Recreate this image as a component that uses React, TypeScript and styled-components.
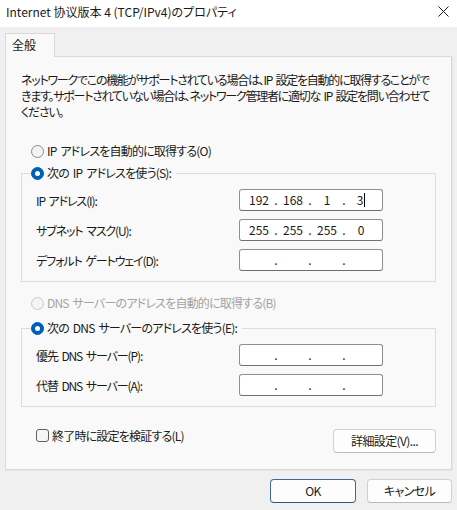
import React from 'react';
import styled, { createGlobalStyle, css } from 'styled-components';

const GlobalStyle = createGlobalStyle`
  html, body {
    margin: 0;
    padding: 0;
    background: #f0f0f0;
  }
  body {
    font-family: "Noto Sans CJK JP", "Noto Sans", sans-serif;
    font-size: 12px;
    color: #1a1a1a;
    font-feature-settings: "palt";
  }
`;

const Window = styled.div`
  width: 457px;
  height: 510px;
  display: flex;
  flex-direction: column;
  background: #f0f0f0;
  overflow: hidden;
`;

const TitleBar = styled.div`
  height: 27px;
  flex: none;
  display: flex;
  align-items: flex-start;
  justify-content: space-between;
  background: #ffffff;
  padding: 4px 7px 0 6px;
  box-sizing: border-box;
`;

const Title = styled.div`
  line-height: 16px;
  white-space: nowrap;
`;

const CloseIcon = styled.svg`
  margin-top: 2px;
  margin-right: 1px;
`;

const Body = styled.div`
  padding: 6px 5px 0;
`;

const TabStrip = styled.div`
  display: flex;
`;

const Tab = styled.div`
  width: 50px;
  height: 24px;
  box-sizing: border-box;
  border: 1px solid #d9d9d9;
  border-bottom: none;
  background: #f9f9f9;
  padding-left: 6px;
  line-height: 22px;
  position: relative;
  z-index: 1;
  margin-bottom: -1px;
`;

const Panel = styled.div`
  border: 1px solid #d9d9d9;
  box-shadow: 1px 1px 0 #e6e6e6;
  background: #f9f9f9;
  padding: 15px 15px 16px 15px;
  letter-spacing: -0.8px;
  word-spacing: 2px;
`;

const Description = styled.p`
  margin: 0;
  line-height: 16px;
  white-space: nowrap;
  letter-spacing: -1.25px;
`;

const radioBase = css`
  width: 13px;
  height: 13px;
  border-radius: 50%;
  box-sizing: border-box;
  flex: none;
  position: relative;
`;

const RadioDot = styled.span<{ $checked?: boolean; $disabled?: boolean }>`
  ${radioBase}
  border: 1px solid ${(p) => (p.$disabled ? '#c9c9c9' : '#8a8a8a')};
  background: ${(p) => (p.$disabled ? '#f4f4f4' : '#f3f3f3')};
  ${(p) =>
    p.$checked &&
    css`
      border-color: #005fb8;
      background: #005fb8;
      &::after {
        content: '';
        position: absolute;
        left: 3px;
        top: 3px;
        width: 5px;
        height: 5px;
        border-radius: 50%;
        background: #ffffff;
      }
    `}
`;

const RadioRow = styled.div<{ $top: number; $disabled?: boolean }>`
  display: flex;
  align-items: center;
  gap: 3px;
  height: 16px;
  line-height: 16px;
  padding-left: 10px;
  margin-top: ${(p) => p.$top}px;
  color: ${(p) => (p.$disabled ? '#a3a3a3' : 'inherit')};
  white-space: nowrap;
`;

const Group = styled.fieldset<{ $top: number }>`
  margin: ${(p) => p.$top}px 0 0;
  padding: 8px 0 10px 14px;
  border: 1px solid #dcdcdc;
  min-width: 0;
`;

const Legend = styled.legend`
  display: flex;
  align-items: center;
  gap: 3px;
  height: 16px;
  margin-left: -5px;
  padding: 0 5px 0 0;
  line-height: 16px;
  white-space: nowrap;
`;

const FieldGrid = styled.div`
  display: grid;
  grid-template-columns: 203px 144px;
  row-gap: 8px;
  align-items: center;
`;

const FieldLabel = styled.span`
  white-space: nowrap;
  letter-spacing: -1.1px;
`;

const IpBox = styled.div`
  width: 144px;
  height: 22px;
  box-sizing: border-box;
  border: 1px solid #8f8f8f;
  border-bottom-color: #6f6f6f;
  border-radius: 3px;
  background: #ffffff;
  display: flex;
  align-items: center;
  padding-left: 5px;
  line-height: 16px;
  letter-spacing: 0;
`;

const Octet = styled.span`
  width: 28px;
  text-align: center;
`;

const Sep = styled.span`
  width: 6px;
  text-align: center;
`;

const Caret = styled.span`
  display: inline-block;
  width: 1px;
  height: 14px;
  background: #000;
  vertical-align: -2px;
  margin-left: 1px;
`;

const BottomRow = styled.div`
  display: flex;
  justify-content: space-between;
  align-items: flex-start;
  margin-top: 20px;
`;

const CheckRow = styled.label`
  display: flex;
  align-items: center;
  gap: 3px;
  height: 16px;
  padding-left: 15px;
  white-space: nowrap;
`;

const CheckBox = styled.span`
  width: 13px;
  height: 13px;
  box-sizing: border-box;
  border: 1px solid #616161;
  border-radius: 3px;
  background: #f6f6f6;
  flex: none;
`;

const Button = styled.button<{ $width: number; $default?: boolean }>`
  width: ${(p) => p.$width}px;
  height: 24px;
  box-sizing: border-box;
  border: 1px solid ${(p) => (p.$default ? '#3c6a94' : '#d0d0d0')};
  border-bottom-color: ${(p) => (p.$default ? '#2b577f' : '#b9b9b9')};
  border-radius: 4px;
  background: #fdfdfd;
  font-family: inherit;
  font-size: 12px;
  font-feature-settings: "palt";
  letter-spacing: -0.6px;
  color: #1a1a1a;
  padding: 0;
  line-height: 20px;
`;

const DetailButton = styled(Button)`
  margin-top: 2px;
`;

const Footer = styled.div`
  display: flex;
  justify-content: flex-end;
  gap: 11px;
  margin-top: 9px;
`;

function IpField({ parts, caret }: { parts: string[]; caret?: boolean }) {
  return (
    <IpBox>
      {parts.map((p, i) => (
        <React.Fragment key={i}>
          <Octet>
            {p}
            {caret && i === parts.length - 1 ? <Caret /> : null}
          </Octet>
          {i < parts.length - 1 ? <Sep>.</Sep> : null}
        </React.Fragment>
      ))}
    </IpBox>
  );
}

const empty = ['', '', '', ''];

export default function App() {
  return (
    <>
      <GlobalStyle />
      <Window>
        <TitleBar>
          <Title>Internet 协议版本 4 (TCP/IPv4)のプロパティ</Title>
          <CloseIcon width="11" height="11" viewBox="0 0 11 11">
            <path d="M0.5 0.5 L10.5 10.5 M10.5 0.5 L0.5 10.5" stroke="#1a1a1a" strokeWidth="1" fill="none" />
          </CloseIcon>
        </TitleBar>
        <Body>
          <TabStrip>
            <Tab>全般</Tab>
          </TabStrip>
          <Panel>
            <Description>
              ネットワークでこの機能がサポートされている場合は、IP 設定を自動的に取得することがで
              <br />
              きます。サポートされていない場合は、ネットワーク管理者に適切な IP 設定を問い合わせて
              <br />
              ください。
            </Description>

            <RadioRow $top={23}>
              <RadioDot />
              IP アドレスを自動的に取得する(O)
            </RadioRow>

            <Group $top={6}>
              <Legend>
                <RadioDot $checked />
                次の IP アドレスを使う(S):
              </Legend>
              <FieldGrid>
                <FieldLabel>IP アドレス(I):</FieldLabel>
                <IpField parts={['192', '168', '1', '3']} caret />
                <FieldLabel>サブネット マスク(U):</FieldLabel>
                <IpField parts={['255', '255', '255', '0']} />
                <FieldLabel>デフォルト ゲートウェイ(D):</FieldLabel>
                <IpField parts={empty} />
              </FieldGrid>
            </Group>

            <RadioRow $top={13} $disabled>
              <RadioDot $disabled />
              DNS サーバーのアドレスを自動的に取得する(B)
            </RadioRow>

            <Group $top={9}>
              <Legend>
                <RadioDot $checked />
                次の DNS サーバーのアドレスを使う(E):
              </Legend>
              <FieldGrid>
                <FieldLabel>優先 DNS サーバー(P):</FieldLabel>
                <IpField parts={empty} />
                <FieldLabel>代替 DNS サーバー(A):</FieldLabel>
                <IpField parts={empty} />
              </FieldGrid>
            </Group>

            <BottomRow>
              <CheckRow>
                <CheckBox />
                終了時に設定を検証する(L)
              </CheckRow>
              <DetailButton $width={103}>詳細設定(V)...</DetailButton>
            </BottomRow>
          </Panel>
          <Footer>
            <Button $width={86} $default>
              OK
            </Button>
            <Button $width={85}>キャンセル</Button>
          </Footer>
        </Body>
      </Window>
    </>
  );
}
